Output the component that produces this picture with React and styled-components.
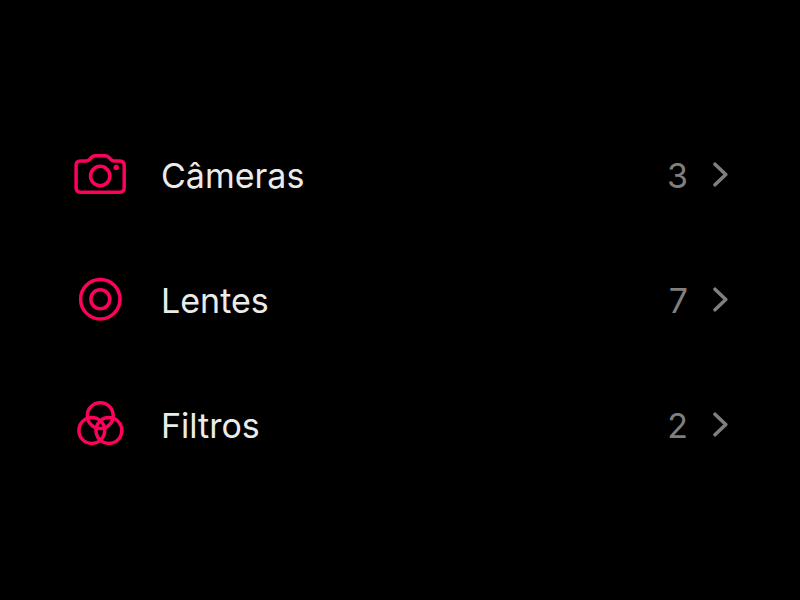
import React from 'react';
import styled, { createGlobalStyle } from 'styled-components';

const GlobalStyle = createGlobalStyle`
  * { box-sizing: border-box; }
  body {
    margin: 0;
    background: #000;
    font-family: Inter, "Liberation Sans", sans-serif;
    -webkit-font-smoothing: antialiased;
  }
`;

const Page = styled.main`
  min-height: 100vh;
  padding: 0 72px;
  display: flex;
  flex-direction: column;
  justify-content: center;
`;

const List = styled.ul`
  list-style: none;
  margin: 0;
  padding: 0;
`;

const Row = styled.button`
  width: 100%;
  height: 125px;
  padding: 0;
  display: flex;
  align-items: center;
  border: 0;
  background: transparent;
  color: #ebebeb;
  font: inherit;
  font-size: 34px;
  line-height: 40px;
  text-align: left;
  cursor: pointer;
`;

const Icon = styled.svg`
  width: 56px;
  height: 56px;
  flex: none;
  margin-right: 33px;
  fill: none;
  stroke: #ff005c;
  stroke-width: 3.5;
  stroke-linejoin: round;
`;

const Dot = styled.circle`
  fill: #ff005c;
  stroke: none;
`;

const Label = styled.span`
  flex: 1;
  padding-top: 2px;
`;

const Count = styled.span`
  padding-top: 2px;
  margin-right: 24px;
  color: #7f7f7f;
`;

const Chevron = styled.svg`
  width: 16px;
  height: 28px;
  flex: none;
  fill: none;
  stroke: #7f7f7f;
  stroke-width: 3.5;
  stroke-linecap: round;
  stroke-linejoin: round;
`;

const items = [
  {
    label: 'Câmeras',
    count: 3,
    icon: (
      <>
        <path d="M8.5 14H14C15.5 14 16.4 13.6 17.4 12.6L20 10.1C21 9.1 21.9 8.8 23.2 8.8H33.2C34.5 8.8 35.4 9.1 36.4 10.1L39 12.6C40 13.6 40.9 14 42.4 14H47.8Q52.2 14 52.2 18.4V40.8Q52.2 45.2 47.8 45.2H8.5Q4.1 45.2 4.1 40.8V18.4Q4.1 14 8.5 14Z" />
        <circle cx="28.2" cy="29" r="9.7" />
        <Dot cx="44.2" cy="20.4" r="2.7" />
      </>
    ),
  },
  {
    label: 'Lentes',
    count: 7,
    icon: (
      <>
        <circle cx="28.3" cy="27.2" r="19.7" />
        <circle cx="28.3" cy="27.2" r="9.5" />
      </>
    ),
  },
  {
    label: 'Filtros',
    count: 2,
    icon: (
      <>
        <circle cx="28.3" cy="18.7" r="12.9" />
        <circle cx="19.8" cy="33.5" r="12.9" />
        <circle cx="36.9" cy="33.5" r="12.9" />
      </>
    ),
  },
];

export default function App() {
  return (
    <>
      <GlobalStyle />
      <Page>
        <List>
          {items.map((item) => (
            <li key={item.label}>
              <Row type="button">
                <Icon viewBox="0 0 56 56" aria-hidden="true">{item.icon}</Icon>
                <Label>{item.label}</Label>
                <Count>{item.count}</Count>
                <Chevron viewBox="0 0 16 28" aria-hidden="true">
                  <path d="M3 3.2L13.8 13.5L3 23.8" />
                </Chevron>
              </Row>
            </li>
          ))}
        </List>
      </Page>
    </>
  );
}
